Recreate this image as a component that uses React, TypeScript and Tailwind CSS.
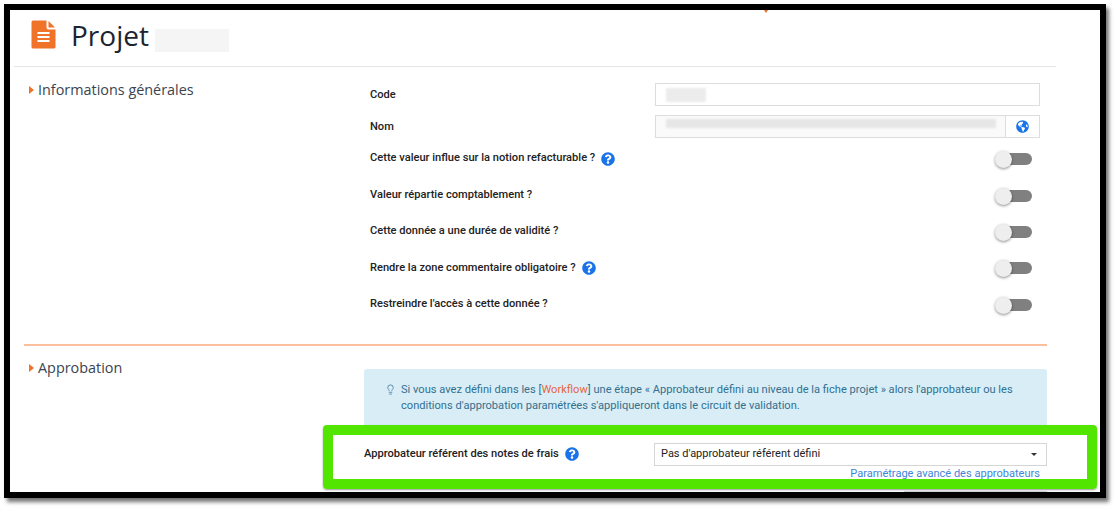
import { FaGlobeAmericas, FaQuestionCircle } from "react-icons/fa";
import { Lightbulb } from "lucide-react";

const Toggle = () => (
  <div className="relative h-[16px] w-[37px]">
    <div className="absolute left-[6px] top-[2px] h-[12px] w-[31px] rounded-full bg-[#808080]" />
    <div className="absolute left-0 top-0 h-[17px] w-[17px] rounded-full bg-[#eeeeee] shadow-[0_1px_3px_rgba(0,0,0,0.45)]" />
  </div>
);

const Help = () => <FaQuestionCircle className="ml-[6px] text-[14px] text-[#1a73e8]" />;

const SectionTitle = ({ label }: { label: string }) => (
  <div className="flex items-center font-['Open_Sans',sans-serif] text-[14.4px] leading-[18px] text-[#3a4450]">
    <span className="ml-[5px] mr-[4px] h-0 w-0 border-y-[4px] border-l-[5px] border-y-transparent border-l-[#f0732a]" />
    {label}
  </div>
);

const toggleRows = [
  { label: "Cette valeur influe sur la notion refacturable ?", help: true },
  { label: "Valeur répartie comptablement ?", help: false },
  { label: "Cette donnée a une durée de validité ?", help: false },
  { label: "Rendre la zone commentaire obligatoire ?", help: true },
  { label: "Restreindre l'accès à cette donnée ?", help: false },
];

const App = () => {
  return (
    <div className="h-[511px] w-[1119px] overflow-hidden bg-white pl-[4px] pt-[4px] font-['Roboto',sans-serif]">
      <div className="relative h-[494px] w-[1102px] overflow-hidden border-[6px] border-black bg-white shadow-[3px_4px_4px_rgba(0,0,0,0.55)]">
        <span className="absolute left-[754px] top-0 h-0 w-0 border-x-[2px] border-t-[3px] border-x-transparent border-t-[#f0732a]" />

        <div className="ml-[4px] flex h-[57px] w-[1042px] items-start border-b border-[#e5e5e5] pl-[17px] pt-[10px]">
          <svg width="25" height="29" viewBox="0 0 25 29" className="shrink-0">
            <path
              d="M2 0.5H15.5V7.5Q15.5 9.5 17.5 9.5H24.5V27Q24.5 28.5 23 28.5H2Q0.5 28.5 0.5 27V2Q0.5 0.5 2 0.5Z"
              fill="#f0732a"
            />
            <path d="M17.5 1L24 7.5H17.5Z" fill="#f0732a" />
            <path d="M6.5 13H18.5M6.5 17H18.5M6.5 21H18.5" stroke="#ffffff" strokeWidth="1.8" />
          </svg>
          <h1 className="ml-[15px] font-['Open_Sans',sans-serif] text-[28px] leading-[30px] text-[#1b2430]">Projet</h1>
          <div className="ml-[6px] mt-[9px] h-[23px] w-[74px] bg-[#f5f5f5]" />
        </div>

        <div className="ml-[14px] flex h-[277px] w-[1023px] pt-[14px]">
          <div className="w-[346px] shrink-0">
            <SectionTitle label="Informations générales" />
          </div>
          <div className="flex flex-col pt-[2px]">
            <div className="flex h-[23px] items-center">
              <label className="w-[285px] pt-[2px] text-[11.1px] font-medium text-[#222222]">Code</label>
              <div className="flex h-[23px] w-[385px] items-center border border-[#dddddd] pl-[10px]">
                <div className="h-[14px] w-[40px] bg-[#ececec] blur-[1px]" />
              </div>
            </div>
            <div className="mt-[9px] flex h-[23px] items-center">
              <label className="w-[285px] pt-[2px] text-[11.1px] font-medium text-[#222222]">Nom</label>
              <div className="flex h-[23px] w-[385px] border border-[#dddddd]">
                <div className="flex-1 border-r border-[#dddddd] bg-[#fafafa] pl-[10px] pt-[3px]">
                  <div className="h-[9px] w-[330px] bg-[#e6e6e6] blur-[1px]" />
                </div>
                <div className="flex w-[33px] items-center justify-center">
                  <FaGlobeAmericas className="text-[13px] text-[#1a73e8]" />
                </div>
              </div>
            </div>
            <div className="mt-[3px] flex flex-col">
              {toggleRows.map((row) => (
                <div key={row.label} className="flex h-[36.4px] w-[670px] items-center justify-between pr-[8px]">
                  <div className="flex items-center pb-[1px] text-[11.1px] font-medium text-[#222222]">
                    {row.label}
                    {row.help && <Help />}
                  </div>
                  <Toggle />
                </div>
              ))}
            </div>
          </div>
        </div>

        <div className="ml-[14px] h-[2px] w-[1023px] bg-[#fbbf9e]" />

        <div className="ml-[14px] flex w-[1023px] pt-[13px]">
          <div className="w-[340px] shrink-0">
            <SectionTitle label="Approbation" />
          </div>
          <div className="flex w-[683px] flex-col">
            <div className="mt-[10px] flex h-[62px] rounded-t-[3px] bg-[#d9edf7] pl-[21px] pt-[13px] text-[11.1px] leading-[16px] text-[#31708f]">
              <Lightbulb className="mr-[5px] mt-[2px] h-[11px] w-[11px] shrink-0" strokeWidth={1.6} />
              <p className="w-[630px]">
                Si vous avez défini dans les [<span className="text-[#e8663c]">Workflow</span>] une étape « Approbateur
                défini au niveau de la fiche projet » alors l'approbateur ou les conditions d'approbation paramétrées
                s'appliqueront dans le circuit de validation.
              </p>
            </div>
            <div className="mt-[12px] flex h-[23px] items-center">
              <label className="flex w-[290px] items-center text-[11.1px] font-medium text-[#222222]">
                Approbateur référent des notes de frais
                <Help />
              </label>
              <div className="flex h-[23px] w-[393px] items-center justify-between border border-[#d5d5d5] pl-[6px] pr-[9px] text-[11px] text-[#222222]">
                Pas d'approbateur référent défini
                <span className="h-0 w-0 border-x-[3px] border-t-[3px] border-x-transparent border-t-[#333333]" />
              </div>
            </div>
            <a className="mt-[1px] w-[676px] text-right text-[11.05px] leading-[14px] text-[#3f85d8]">
              Paramétrage avancé des approbateurs
            </a>
            <div className="ml-auto mt-[10px] h-[10px] w-[143px] border border-[#d5d5d5]" />
          </div>
        </div>

        <div className="absolute left-[313px] top-[415px] h-[64px] w-[774px] rounded-[4px] border-[10px] border-[#52e500] shadow-[0_1px_2px_rgba(0,0,0,0.4)]" />
      </div>
    </div>
  );
};

export default App;
